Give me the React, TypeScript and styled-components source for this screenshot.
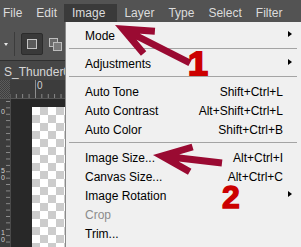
import React from 'react';
import styled, { createGlobalStyle } from 'styled-components';

const GlobalStyle = createGlobalStyle`
  html, body {
    margin: 0;
    padding: 0;
    background: #535353;
    overflow: hidden;
  }
  body {
    font-family: "Liberation Sans", Arial, sans-serif;
  }
`;

const Screen = styled.div`
  position: relative;
  width: 301px;
  height: 247px;
  overflow: hidden;
  display: flex;
  flex-direction: column;
  background: #535353;
`;

const MenuBar = styled.div`
  height: 22px;
  flex-shrink: 0;
  display: flex;
  align-items: flex-end;
`;

const MenuTitle = styled.div<{ $active?: boolean }>`
  height: 18px;
  padding: 1px ${({ $active }) => ($active ? '12px' : '7px')} 0
    ${({ $active }) => ($active ? '8px' : '7px')};
  box-sizing: border-box;
  line-height: 17px;
  font-size: 12px;
  color: #dcdcdc;
  white-space: nowrap;
  background: ${({ $active }) => ($active ? '#3a3a3a' : 'transparent')};

  &:first-child {
    padding-left: 3px;
  }
`;

const Workspace = styled.div`
  flex: 1;
  min-height: 0;
  display: flex;
  flex-direction: column;
`;

const OptionsBar = styled.div`
  height: 39px;
  flex-shrink: 0;
  box-sizing: border-box;
  padding: 6px 0 0 4px;
  border-bottom: 1px solid #2f2f2f;
  display: flex;
  align-items: center;
  gap: 6px;
`;

const PresetCaret = styled.div`
  width: 0;
  height: 0;
  border-left: 2.5px solid transparent;
  border-right: 2.5px solid transparent;
  border-top: 3px solid #e6e6e6;
`;

const BarDivider = styled.div`
  width: 1px;
  height: 24px;
  background: #3c3c3c;
`;

const ToolButton = styled.div<{ $selected?: boolean }>`
  width: 22px;
  height: 22px;
  box-sizing: border-box;
  border-radius: 2px;
  display: flex;
  align-items: center;
  justify-content: center;
  background: ${({ $selected }) => ($selected ? '#393939' : 'transparent')};
  border: 1px solid ${({ $selected }) => ($selected ? '#2c2c2c' : 'transparent')};
`;

const TabRow = styled.div`
  width: 64px;
  height: 17px;
  padding: 2px 0 0 4px;
  flex-shrink: 0;
  background: #464646;
  color: #d6d6d6;
  font-size: 12px;
  line-height: 19px;
  white-space: nowrap;
  overflow: hidden;
  box-shadow: 240px 0 0 #464646;
`;

const RulerRow = styled.div`
  height: 18px;
  flex-shrink: 0;
  display: flex;
  background: #3c3c3c;
  border-bottom: 1px solid #555555;
`;

const RulerCorner = styled.div`
  width: 10px;
  background-image: repeating-conic-gradient(#5c5c5c 0 25%, #3e3e3e 0 50%);
  background-size: 2px 2px;
`;

const HRuler = styled.div`
  flex: 1;
  display: flex;
  background-image: linear-gradient(to right, #8e8e8e 1px, transparent 1px);
  background-size: 6.4px 4px;
  background-repeat: repeat-x;
  background-position: 25px 100%;
`;

const HRulerMark = styled.span<{ $offset: number }>`
  margin-left: ${({ $offset }) => $offset}px;
  border-left: 1px solid #8e8e8e;
  padding-left: 1px;
  font-size: 10px;
  line-height: 11px;
  color: #d0d0d0;
`;

const CanvasArea = styled.div`
  flex: 1;
  min-height: 0;
  display: flex;
`;

const VRuler = styled.div`
  width: 10px;
  flex-shrink: 0;
  overflow: hidden;
  display: flex;
  flex-direction: column;
  background-color: #3c3c3c;
  border-right: 1px solid #4a4a4a;
  background-image: linear-gradient(to bottom, #8e8e8e 1px, transparent 1px);
  background-size: 4px 6.4px;
  background-repeat: repeat-y;
  background-position: 100% 2px;
`;

const VRulerMark = styled.span<{ $gap: number }>`
  margin-top: ${({ $gap }) => $gap}px;
  padding-left: 1px;
  width: 6px;
  font-size: 7px;
  line-height: 7px;
  color: #d0d0d0;
  white-space: pre;
`;

const Pasteboard = styled.div`
  flex: 1;
  background: #282828;
  padding: 8px 0 0 21px;
  overflow: hidden;
`;

const Transparency = styled.div`
  width: 260px;
  height: 200px;
  background-color: #ffffff;
  background-image: repeating-conic-gradient(#cccccc 0 25%, #ffffff 0 50%);
  background-size: 16px 16px;
`;

const Dropdown = styled.div`
  position: absolute;
  top: 22px;
  left: 65px;
  width: 236px;
  bottom: -20px;
  box-sizing: border-box;
  padding-top: 5px;
  background: #f0f0f0;
  border-left: 1px solid #8a8a8a;
`;

const MenuRow = styled.div<{ $disabled?: boolean }>`
  position: relative;
  height: 19px;
  line-height: 19px;
  padding: 0 18px 0 19px;
  display: flex;
  justify-content: space-between;
  font-size: 12px;
  white-space: nowrap;
  color: ${({ $disabled }) => ($disabled ? '#8c8c8c' : '#000000')};
`;

const SubmenuArrow = styled.span`
  position: absolute;
  right: 9px;
  top: 4px;
  width: 0;
  height: 0;
  border-left: 4px solid #000000;
  border-top: 3.5px solid transparent;
  border-bottom: 3.5px solid transparent;
`;

const Separator = styled.div`
  height: 0;
  margin: 2px 4px 6px 3px;
  border-top: 1px solid #a4a4a4;
`;

const Overlay = styled.svg`
  position: absolute;
  top: 0;
  left: 0;
  pointer-events: none;
`;

type Pt = [number, number];

function arrowPath(tip: Pt, tail: Pt, wing: number, spread: number, w: number) {
  const dx = tail[0] - tip[0];
  const dy = tail[1] - tip[1];
  const len = Math.hypot(dx, dy);
  const ux = dx / len;
  const uy = dy / len;
  const rad = (spread * Math.PI) / 180;
  const back = w / 2 / Math.sin(rad);
  const vx = tip[0] + ux * back;
  const vy = tip[1] + uy * back;
  const rot = (a: number): Pt => [
    vx + (ux * Math.cos(a) - uy * Math.sin(a)) * wing,
    vy + (ux * Math.sin(a) + uy * Math.cos(a)) * wing,
  ];
  const a = rot(rad);
  const b = rot(-rad);
  const f = (p: Pt) => `${p[0].toFixed(1)},${p[1].toFixed(1)}`;
  return `M${f(tail)} L${f([vx, vy])} M${f(a)} L${f([vx, vy])} L${f(b)}`;
}

function Arrow({ tip, tail }: { tip: Pt; tail: Pt }) {
  return (
    <path
      d={arrowPath(tip, tail, 32, 23, 7)}
      fill="none"
      stroke="#9a0a32"
      strokeWidth={7}
      strokeLinejoin="miter"
      strokeMiterlimit={10}
    />
  );
}

const menuTitles = ['File', 'Edit', 'Image', 'Layer', 'Type', 'Select', 'Filter'];

type Entry =
  | { sep: true }
  | { label: string; shortcut?: string; sub?: boolean; disabled?: boolean };

const entries: Entry[] = [
  { label: 'Mode', sub: true },
  { sep: true },
  { label: 'Adjustments', sub: true },
  { sep: true },
  { label: 'Auto Tone', shortcut: 'Shift+Ctrl+L' },
  { label: 'Auto Contrast', shortcut: 'Alt+Shift+Ctrl+L' },
  { label: 'Auto Color', shortcut: 'Shift+Ctrl+B' },
  { sep: true },
  { label: 'Image Size...', shortcut: 'Alt+Ctrl+I' },
  { label: 'Canvas Size...', shortcut: 'Alt+Ctrl+C' },
  { label: 'Image Rotation', sub: true },
  { label: 'Crop', disabled: true },
  { label: 'Trim...' },
];

function App() {
  return (
    <>
      <GlobalStyle />
      <Screen>
        <MenuBar>
          {menuTitles.map((t) => (
            <MenuTitle key={t} $active={t === 'Image'}>
              {t}
            </MenuTitle>
          ))}
        </MenuBar>

        <Workspace>
          <OptionsBar>
            <PresetCaret />
            <BarDivider />
            <ToolButton $selected>
              <svg width="10" height="10" viewBox="0 0 10 10">
                <rect x="0.5" y="0.5" width="9" height="9" fill="#5a5a5a" stroke="#c4c4c4" />
              </svg>
            </ToolButton>
            <svg width="13" height="13" viewBox="0 0 13 13">
              <rect x="0.5" y="0.5" width="8" height="8" fill="#6a6a6a" stroke="#bdbdbd" />
              <rect x="4.5" y="4.5" width="8" height="8" fill="#7a7a7a" stroke="#bdbdbd" />
            </svg>
          </OptionsBar>

          <TabRow>S_Thunder0</TabRow>

          <RulerRow>
            <RulerCorner />
            <HRuler>
              <HRulerMark $offset={25}>0</HRulerMark>
            </HRuler>
          </RulerRow>

          <CanvasArea>
            <VRuler>
              <VRulerMark $gap={9}>0</VRulerMark>
              <VRulerMark $gap={52}>{'5\n0'}</VRulerMark>
              <VRulerMark $gap={48}>{'1\n0'}</VRulerMark>
            </VRuler>
            <Pasteboard>
              <Transparency />
            </Pasteboard>
          </CanvasArea>
        </Workspace>

        <Dropdown>
          {entries.map((e, i) =>
            'sep' in e ? (
              <Separator key={i} />
            ) : (
              <MenuRow key={i} $disabled={e.disabled}>
                <span>{e.label}</span>
                {e.shortcut && <span>{e.shortcut}</span>}
                {e.sub && <SubmenuArrow />}
              </MenuRow>
            )
          )}
        </Dropdown>

        <Overlay width="301" height="247" viewBox="0 0 301 247">
          <Arrow tip={[115, 25]} tail={[190, 63]} />
          <Arrow tip={[153, 155]} tail={[222, 163]} />
          <text
            x="188"
            y="75"
            fill="#cc0000"
            stroke="#cc0000"
            strokeWidth="1.8"
            fontFamily="'Liberation Sans', Arial, sans-serif"
            fontWeight="bold"
            fontSize="33"
            textLength="20"
            lengthAdjust="spacingAndGlyphs"
          >
            1
          </text>
          <text
            x="222"
            y="208"
            fill="#cc0000"
            stroke="#cc0000"
            strokeWidth="1.4"
            fontFamily="'Liberation Sans', Arial, sans-serif"
            fontWeight="bold"
            fontSize="32"
          >
            2
          </text>
        </Overlay>
      </Screen>
    </>
  );
}

export default App;
